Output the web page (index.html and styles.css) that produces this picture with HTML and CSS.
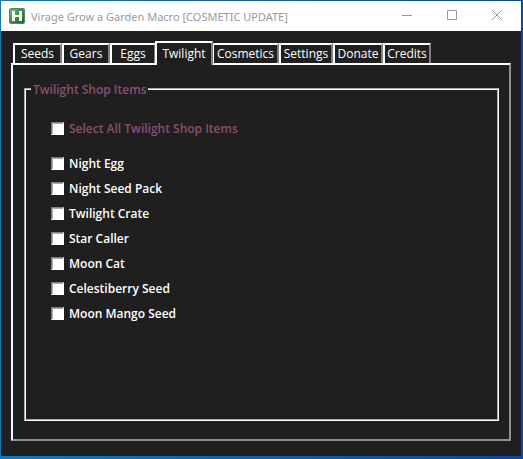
FILE: index.html
```html
<!DOCTYPE html>
<html lang="en">
<head>
    <meta charset="UTF-8">
    <meta name="viewport" content="width=device-width, initial-scale=1.0">
    <title>Virage Grow a Garden Macro [COSMETIC UPDATE]</title>
    <link rel="stylesheet" href="styles.css">
</head>
<body>
    <div class="window">
        <header class="titlebar">
            <svg class="app-icon" width="16" height="16" viewBox="0 0 16 16" aria-hidden="true">
                <defs>
                    <linearGradient id="green" x1="0" y1="0" x2="1" y2="1">
                        <stop offset="0" stop-color="#7fb884"/>
                        <stop offset="0.5" stop-color="#3f8f48"/>
                        <stop offset="1" stop-color="#14661f"/>
                    </linearGradient>
                </defs>
                <rect x="0.5" y="0.5" width="15" height="15" rx="1.5" fill="url(#green)" stroke="#4b8a52"/>
                <path d="M3 3h3v4h4V3h3v10h-3V9H6v4H3z" fill="#fff"/>
            </svg>
            <h1 class="title">Virage Grow a Garden Macro [COSMETIC UPDATE]</h1>
            <div class="window-buttons">
                <button type="button" aria-label="Minimize">
                    <svg width="10" height="10" viewBox="0 0 10 10"><path d="M0 5.5h10"/></svg>
                </button>
                <button type="button" aria-label="Maximize">
                    <svg width="10" height="10" viewBox="0 0 10 10"><path d="M.5.5h9v9h-9z"/></svg>
                </button>
                <button type="button" aria-label="Close">
                    <svg width="10" height="10" viewBox="0 0 10 10"><path d="M0 0l10 10M10 0L0 10"/></svg>
                </button>
            </div>
        </header>

        <main class="content">
            <div class="tabs" role="tablist">
                <button type="button" class="tab" role="tab">Seeds</button>
                <button type="button" class="tab" role="tab">Gears</button>
                <button type="button" class="tab" role="tab">Eggs</button>
                <button type="button" class="tab active" role="tab" aria-selected="true">Twilight</button>
                <button type="button" class="tab" role="tab">Cosmetics</button>
                <button type="button" class="tab" role="tab">Settings</button>
                <button type="button" class="tab" role="tab">Donate</button>
                <button type="button" class="tab" role="tab">Credits</button>
            </div>

            <div class="panel" role="tabpanel">
                <fieldset class="group">
                    <legend>Twilight Shop Items</legend>
                    <label class="item select-all"><input type="checkbox">Select All Twilight Shop Items</label>
                    <label class="item"><input type="checkbox">Night Egg</label>
                    <label class="item"><input type="checkbox">Night Seed Pack</label>
                    <label class="item"><input type="checkbox">Twilight Crate</label>
                    <label class="item"><input type="checkbox">Star Caller</label>
                    <label class="item"><input type="checkbox">Moon Cat</label>
                    <label class="item"><input type="checkbox">Celestiberry Seed</label>
                    <label class="item"><input type="checkbox">Moon Mango Seed</label>
                </fieldset>
            </div>
        </main>
    </div>
</body>
</html>
```
FILE: styles.css
```css
* {
    box-sizing: border-box;
}
body {
    margin: 0;
    font-family: "Open Sans", "Noto Sans", sans-serif;
    font-size: 12px;
    color: #fff;
}
/* the desktop shows as a thin edge around the window */
.window {
    min-height: 100vh;
    display: flex;
    flex-direction: column;
    padding: 1px 2px 3px 1px;
    background: linear-gradient(to right, #1379be, #0c479c);
}
.titlebar {
    display: flex;
    align-items: center;
    height: 30px;
    padding: 0 2px 0 8px;
    background: #fff;
}
.app-icon {
    flex: none;
}
.title {
    flex: 1;
    margin: 0 0 0 6px;
    font-family: "Noto Sans", sans-serif;
    font-size: 11px;
    font-weight: normal;
    color: #999;
    white-space: nowrap;
}
.window-buttons {
    display: flex;
    height: 28px;
    align-self: flex-start;
}
.window-buttons button {
    width: 45px;
    display: flex;
    align-items: center;
    justify-content: center;
    padding: 0;
    border: none;
    background: none;
}
.window-buttons svg {
    fill: none;
    stroke: #999;
}
.content {
    flex: 1;
    display: flex;
    flex-direction: column;
    padding: 12px 10px 15px;
    background: #1f1f1f;
}
.tabs {
    display: grid;
    grid-template-columns: 49px 48px 46px 56px 67px 54px 50px 48px;
    height: 20px;
    padding-left: 2px;
}
.tab {
    padding: 0;
    border: 2px solid #fff;
    border-right-color: #808080;
    border-bottom: none;
    background: #1f1f1f;
    color: #fff;
    font-family: inherit;
    font-size: 12px;
    line-height: 18px;
    text-align: center;
    white-space: nowrap;
}
/* the open tab stands taller and covers the line of the panel */
.tab.active {
    z-index: 1;
    margin: -2px -1px -2px -1px;
}
.panel {
    flex: 1;
    display: flex;
    padding: 14px 10px 18px 11px;
    border: 2px solid #fff;
    border-right-color: #909090;
    border-bottom-color: #909090;
}
.group {
    flex: 1;
    min-width: 0;
    margin: 0;
    padding: 17px 25px;
    border: 2px groove #fff;
    font-weight: 600;
}
.group legend {
    margin-left: -20px;
    padding: 2px 2px 0;
    line-height: 18px;
    color: #8a5070;
}
.item {
    display: flex;
    align-items: center;
    gap: 5px;
    height: 25px;
}
.select-all {
    margin-bottom: 10px;
    color: #8a5070;
}
.item input {
    appearance: none;
    width: 13px;
    height: 13px;
    margin: 0;
    border: 1px solid #fff;
    border-top-color: #808080;
    border-left-color: #808080;
    background: #fff;
    box-shadow: inset 1px 1px #a8a8a8;
}
.item input:checked {
    background: #8a5070;
}
```
